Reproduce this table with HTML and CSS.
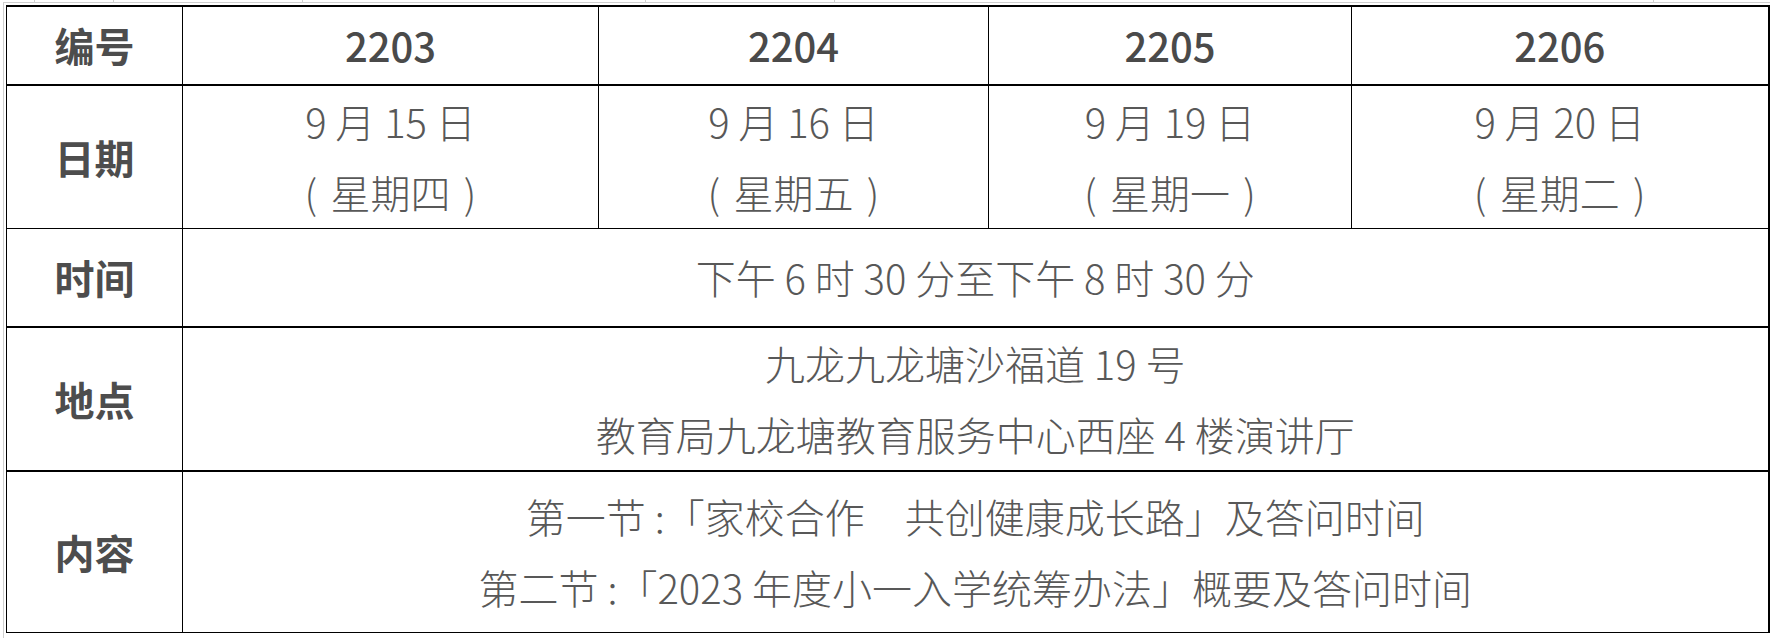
FILE: index.html
```html
<!DOCTYPE html>
<html lang="zh-CN">
<head>
<meta charset="utf-8">
<title>讲座安排</title>
<link rel="stylesheet" href="styles.css">
</head>
<body>
<div class="ticks">
  <span class="tick t1"></span><span class="tick t2"></span><span class="tick t3"></span><span class="tick t4"></span><span class="tick t5"></span><span class="tick t6"></span>
</div>
<div class="frame">
  <table class="schedule">
    <colgroup>
      <col class="c-label">
      <col class="c-a">
      <col class="c-b">
      <col class="c-c">
      <col class="c-d">
    </colgroup>
    <tr class="row-head">
      <th class="label">编号</th>
      <th class="num">2203</th>
      <th class="num">2204</th>
      <th class="num">2205</th>
      <th class="num">2206</th>
    </tr>
    <tr class="row-date">
      <th class="label">日期</th>
      <td>9 月 15 日<br>(&#8196;星期四&#8196;)</td>
      <td>9 月 16 日<br>(&#8196;星期五&#8196;)</td>
      <td>9 月 19 日<br>(&#8196;星期一&#8196;)</td>
      <td class="last">9 月 20 日<br>(&#8196;星期二&#8196;)</td>
    </tr>
    <tr class="row-time">
      <th class="label">时间</th>
      <td colspan="4" class="last">下午 6 时 30 分至下午 8 时 30 分</td>
    </tr>
    <tr class="row-place">
      <th class="label">地点</th>
      <td colspan="4" class="last">九龙九龙塘沙福道 19 号<br>教育局九龙塘教育服务中心西座 4 楼演讲厅</td>
    </tr>
    <tr class="row-content">
      <th class="label">内容</th>
      <td colspan="4" class="last">第一节 :「家校合作　共创健康成长路」及答问时间<br>第二节 :「2023 年度小一入学统筹办法」概要及答问时间</td>
    </tr>
  </table>
</div>
</body>
</html>
```

FILE: styles.css
```css
html, body {
  margin: 0;
  padding: 0;
  background: #ffffff;
}

body {
  font-family: "Noto Sans CJK SC", "Noto Sans", sans-serif;
  color: #505050;
  width: 1770px;
  height: 639px;
  overflow: hidden;
}

.ticks {
  position: relative;
  height: 2px;
}

.tick {
  position: absolute;
  top: 0;
  width: 1px;
  height: 3px;
  background: #d0d0d0;
}
.t1 { left: 34px; }
.t2 { left: 113px; }
.t3 { left: 302px; }
.t4 { left: 645px; }
.t5 { left: 834px; }
.t6 { left: 1653px; }

.frame {
  margin-left: 3px;
  border-top: 1px solid #cfcfcf;
  border-left: 1px solid #cfcfcf;
  padding: 2px 0 0 2px;
  height: 636px;
  box-sizing: border-box;
}

.schedule {
  border-collapse: collapse;
  table-layout: fixed;
  width: 1762px;
  font-size: 40px;
}

.c-label { width: 176px; }
.c-a { width: 416px; }
.c-b { width: 390px; }
.c-c { width: 363px; }
.c-d { width: 417px; }

.schedule th,
.schedule td {
  border: 1px solid #000;
  text-align: center;
  vertical-align: middle;
  padding: 0;
  line-height: 71px;
}

.schedule th {
  font-weight: 700;
  color: #4d4d4d;
}

.schedule th.num {
  font-weight: 500;
  color: #4a4a4a;
}

.schedule td {
  font-weight: 300;
  color: #585858;
}

.row-head th {
  border-top-width: 2px;
  border-bottom-width: 2px;
  height: 77px;
}

.row-head th:last-child,
.schedule .last {
  border-right-width: 2px;
}

.row-date th,
.row-date td {
  height: 142px;
}

.row-time th,
.row-time td {
  height: 97px;
  border-bottom-width: 2px;
}

.row-place th,
.row-place td {
  height: 142px;
  border-bottom-width: 2px;
}

.row-content th,
.row-content td {
  height: 160px;
}
```
